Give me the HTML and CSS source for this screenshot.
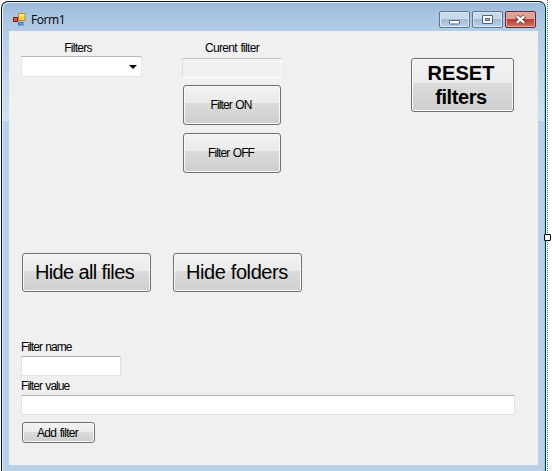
FILE: index.html
```html
<!DOCTYPE html>
<html lang="en">
<head>
<meta charset="utf-8">
<title>Form1</title>
<link rel="stylesheet" href="styles.css">
</head>
<body>
<main class="window">
  <header class="titlebar">
    <svg class="app-icon" width="13" height="13" viewBox="0 0 13 13">
      <rect x=".5" y="4.500" width="4" height="4" fill="#d45a48" stroke="#8f2018"/>
      <rect x="5.500" y=".5" width="6.500" height="7" fill="#ffd35c" stroke="#c98a14"/>
      <path d="M6 1.500h5.500M6 2.500h5.500" stroke="#ffe9a0"/>
      <rect x="5.500" y="9.500" width="4.500" height="2.500" fill="#68a9f2" stroke="#3573c4"/>
    </svg>
    <h1 class="title">Form1</h1>
    <div class="controls">
      <button class="control" aria-label="Minimize"><svg width="29" height="15" viewBox="0 0 29 15"><rect x="9.500" y="8.500" width="10" height="3.500" rx=".5" fill="#fff" stroke="#536479"/></svg></button>
      <button class="control" aria-label="Maximize"><svg width="29" height="15" viewBox="0 0 29 15"><path d="M9.500 3.500h10v8h-10zM12.500 6.500v2h4v-2z" fill="#fff" fill-rule="evenodd" stroke="#536479"/></svg></button>
      <button class="control close" aria-label="Close"><svg width="29" height="15" viewBox="0 0 29 15"><path d="M10.500 4l8 7M18.500 4l-8 7" stroke="#6b3a40" stroke-width="4"/><path d="M10.800 4.200l7.400 6.600M18.200 4.200l-7.400 6.600" stroke="#fff" stroke-width="2.400"/></svg></button>
    </div>
  </header>
  <section class="client">
    <div class="top-row">
      <div class="filters">
        <div class="label centered">Filters</div>
        <div class="combo"><svg width="8" height="4" viewBox="0 0 8 4"><path d="M0 0h8L4 4z"/></svg></div>
      </div>
      <div class="current">
        <div class="label centered current-label">Curent filter</div>
        <div class="field readonly"></div>
        <button class="button toggle"><span class="small">Filter ON</span></button>
        <button class="button toggle"><span class="small">Filter OFF</span></button>
      </div>
      <button class="button reset"><span class="reset-word">RESET</span><span>filters</span></button>
    </div>
    <div class="hide-row">
      <button class="button hide"><span class="files">Hide all files</span></button>
      <button class="button hide"><span>Hide folders</span></button>
    </div>
    <div class="add-form">
      <div class="label tight">Filter name</div>
      <div class="field name"></div>
      <div class="label tight value-label">Filter value</div>
      <div class="field"></div>
      <button class="button add"><span class="small">Add filter</span></button>
    </div>
  </section>
</main>
<div class="selection-edge"></div>
<div class="resize-handle"></div>
</body>
</html>
```
FILE: styles.css
```css
* { box-sizing: border-box; }
body {
  margin: 0;
  width: 552px;
  height: 471px;
  overflow: hidden;
  position: relative;
  background: #fff;
  font-family: "Liberation Sans", sans-serif;
  color: #000;
}
.window {
  width: 545px;
  height: 480px;
  margin: 1px 0 0 1px;
  border: 1px solid #0c1518;
  border-right-color: #063b3d;
  border-radius: 7px 7px 0 0;
  box-shadow: inset 1px 1px #dff0fa, inset -1px 0 #82d5e8;
  background: linear-gradient(#9bb9d8 0, #a9c5e2 14px, #b4cce6 30px, #d0e1f3 119px, #b9d0e9 119px, #b9d0e9 100%);
  padding: 0 7px;
}
.titlebar { height: 29px; display: flex; align-items: flex-start; padding: 0 2px 0 4px; }
.app-icon { margin-top: 11px; }
.title { margin: 9px 0 0 5px; font: 12px/17px "Open Sans", sans-serif; letter-spacing: -.4px; }
.controls { display: flex; gap: 2px; margin: 9px 0 0 auto; }
.control {
  width: 31px;
  height: 17px;
  padding: 0;
  border: 1px solid #60758d;
  border-radius: 2px;
  background: linear-gradient(#c8d9eb 0 45%, #9db8d3 45%, #bdd2e8);
  box-shadow: inset 0 0 0 1px #d9e6f3;
}
.control svg { display: block; }
.close {
  border-color: #652832;
  background: linear-gradient(#dfa096 0 45%, #b9372c 45%, #d07865);
  box-shadow: inset 0 0 0 1px #e5aaa2;
}
.client { width: 529px; height: 434px; background: #f0f0f0; padding: 10px 23px 0 12px; }
.top-row { display: flex; height: 212px; align-items: flex-start; }
.filters { width: 121px; }
.label { font-size: 12px; line-height: 14px; letter-spacing: -.7px; word-spacing: 1px; white-space: nowrap; }
.tight { letter-spacing: -.95px; }
.centered { text-align: center; }
.filters .label { padding-right: 7px; letter-spacing: -.75px; }
.combo {
  height: 21px;
  margin-top: 1px;
  border: 1px solid #e2e5e9;
  border-top-color: #b4b8bf;
  background: #fff;
  display: flex;
  justify-content: flex-end;
  align-items: center;
  padding-right: 4px;
}
.current { width: 100px; margin-left: 40px; }
.current .current-label { padding-top: 0; }
.field { height: 20px; background: #fff; border: 1px solid #e2e3e7; border-top-color: #abadb3; }
.readonly { background: #f0f0f0; margin-top: 3px; border-color: #c5c6c9 #fafafa #fff; border-left-color: #dcdcde; }
.button {
  display: flex;
  align-items: center;
  justify-content: center;
  padding: 0;
  border: 1px solid #707070;
  border-radius: 3px;
  background: linear-gradient(#f2f2f2, #ebebeb 46%, #dbdbdb 46%, #cfcfcf);
  box-shadow: inset 0 0 0 1px #f8f8f8;
  font-family: inherit;
  color: #000;
  white-space: nowrap;
}
.small { font-size: 12px; line-height: 14px; letter-spacing: -.9px; word-spacing: 1px; }
.toggle { width: 98px; height: 40px; margin: 7px 0 8px 1px; padding-right: 2px; }
.toggle + .toggle { margin-top: 0; }
.reset {
  flex-direction: column;
  width: 103px;
  height: 54px;
  margin: 17px 0 0 129px;
  padding-right: 3px;
  font-size: 20px;
  line-height: 24px;
  font-weight: bold;
}
.reset span { letter-spacing: -.4px; }
.reset .reset-word { letter-spacing: .1px; }
.hide-row { display: flex; gap: 22px; padding-left: 1px; height: 87px; }
.hide { width: 129px; height: 39px; padding-right: 1px; font-size: 20px; letter-spacing: -.4px; }
.hide .files { letter-spacing: -.62px; padding-right: 3px; }
.name { width: 100px; }
.add-form .field { margin-top: 2px; }
.add-form .field:not(.name) { width: 494px; }
.value-label { margin-top: 3px; }
.add { width: 73px; height: 21px; margin: 7px 0 0 1px; padding-right: 2px; }
.add .small { letter-spacing: -.75px; }
.selection-edge {
  position: absolute;
  left: 547px;
  top: 0;
  width: 1px;
  height: 471px;
  background: repeating-linear-gradient(#56719a 0 1px, #fff 1px 2px);
}
.resize-handle {
  position: absolute;
  left: 544px;
  top: 234px;
  width: 7px;
  height: 7px;
  border: 1px solid #000;
  border-radius: 1px;
  background: #fff;
}
```
